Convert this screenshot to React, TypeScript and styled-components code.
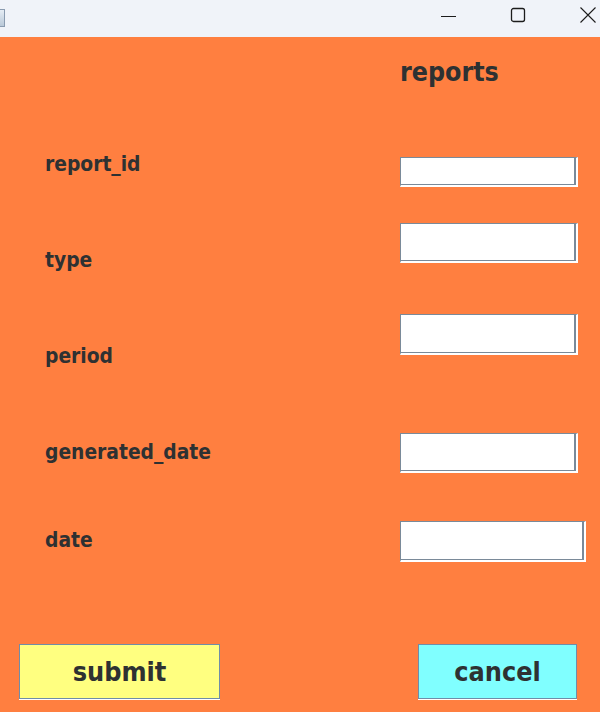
import React, { FC } from 'react';
import styled, { createGlobalStyle } from 'styled-components';

const GlobalStyle = createGlobalStyle`
  html, body {
    margin: 0;
    padding: 0;
    background: #ff7f40;
  }
  body {
    font-family: 'DejaVu Sans', 'Liberation Sans', sans-serif;
  }
`;

const Window = styled.div`
  width: 600px;
  height: 712px;
  display: flex;
  flex-direction: column;
  overflow: hidden;
  background-color: #ff7f40;
`;

const TitleBar = styled.div`
  height: 37px;
  flex: none;
  box-sizing: border-box;
  display: flex;
  align-items: flex-start;
  padding: 6px 4px 0 0;
  background-color: #f0f3f9;
  color: #1c1c1c;
`;

const AppIcon = styled.div`
  width: 4px;
  height: 16px;
  margin-top: 3px;
  margin-right: auto;
  border: 1px solid #8a9bb0;
  border-left: none;
  background: linear-gradient(#e6edf5, #b9c8d8);
`;

const CaptionButton = styled.div<{ gap: number }>`
  height: 17px;
  display: flex;
  align-items: center;
  margin-left: ${(p) => p.gap}px;
`;

const Body = styled.div`
  flex: 1;
  display: flex;
  flex-direction: column;
  color: #2e3132;
  font-weight: bold;
  font-stretch: condensed;
`;

const Heading = styled.div`
  margin: 20px 0 66px 400px;
  height: 30px;
  line-height: 30px;
  font-size: 26.5px;
`;

const Row = styled.div<{ h: number }>`
  height: ${(p) => p.h}px;
  display: grid;
  grid-template-columns: 355px auto;
  align-items: start;
  padding-left: 45px;
`;

const Label = styled.div<{ top: number }>`
  margin-top: ${(p) => p.top}px;
  font-size: 20.8px;
  line-height: 20px;
`;

const Entry = styled.div<{ top: number; h: number; w: number }>`
  margin-top: ${(p) => p.top}px;
  width: ${(p) => p.w}px;
  height: ${(p) => p.h}px;
  box-sizing: border-box;
  background-color: #ffffff;
  border-top: 1px solid #7a8a99;
  border-left: 1px solid #7a8a99;
  border-right: 2px solid #ffffff;
  border-bottom: 2px solid #ffffff;
  box-shadow: inset -2px -1px 0 #7a8a99;
`;

const Buttons = styled.div`
  display: flex;
  justify-content: space-between;
  padding: 0 23px 0 19px;
`;

const Button = styled.button<{ bg: string; w: number }>`
  width: ${(p) => p.w}px;
  height: 55px;
  box-sizing: border-box;
  background-color: ${(p) => p.bg};
  border: 1px solid #6f8da8;
  box-shadow: 0 1px 0 #ffffff;
  font-family: inherit;
  font-weight: bold;
  font-stretch: condensed;
  font-size: 26.8px;
  color: #2e3132;
  padding: 0;
`;

const fields = [
  { name: 'report_id', rowH: 70, labelTop: 1, entryTop: 4, entryH: 30, entryW: 178 },
  { name: 'type', rowH: 91, labelTop: 27, entryTop: 0, entryH: 40, entryW: 178 },
  { name: 'period', rowH: 119, labelTop: 32, entryTop: 0, entryH: 41, entryW: 178 },
  { name: 'generated_date', rowH: 88, labelTop: 9, entryTop: 0, entryH: 40, entryW: 178 },
  { name: 'date', rowH: 123, labelTop: 9, entryTop: 0, entryH: 41, entryW: 186 },
];

const App: FC = () => {
  return (
    <Window>
      <GlobalStyle />
      <TitleBar>
        <AppIcon />
        <CaptionButton gap={0}>
          <svg width="15" height="14" viewBox="0 0 15 14">
            <path d="M0 8.5h15" stroke="#1c1c1c" strokeWidth="1" />
          </svg>
        </CaptionButton>
        <CaptionButton gap={54}>
          <svg width="16" height="16" viewBox="0 0 16 16">
            <rect x="1.5" y="1.5" width="13" height="13" rx="2" fill="none" stroke="#1c1c1c" strokeWidth="1.3" />
          </svg>
        </CaptionButton>
        <CaptionButton gap={54}>
          <svg width="16" height="16" viewBox="0 0 16 16">
            <path d="M0.5 0.5L15.5 15.5M15.5 0.5L0.5 15.5" stroke="#1c1c1c" strokeWidth="1.1" />
          </svg>
        </CaptionButton>
      </TitleBar>
      <Body>
        <Heading>{'reports'}</Heading>
        {fields.map((f) => (
          <Row key={f.name} h={f.rowH}>
            <Label top={f.labelTop}>{f.name}</Label>
            <Entry top={f.entryTop} h={f.entryH} w={f.entryW} />
          </Row>
        ))}
        <Buttons>
          <Button bg="#ffff80" w={201}>{'submit'}</Button>
          <Button bg="#80ffff" w={159}>{'cancel'}</Button>
        </Buttons>
      </Body>
    </Window>
  );
};

export default App;
